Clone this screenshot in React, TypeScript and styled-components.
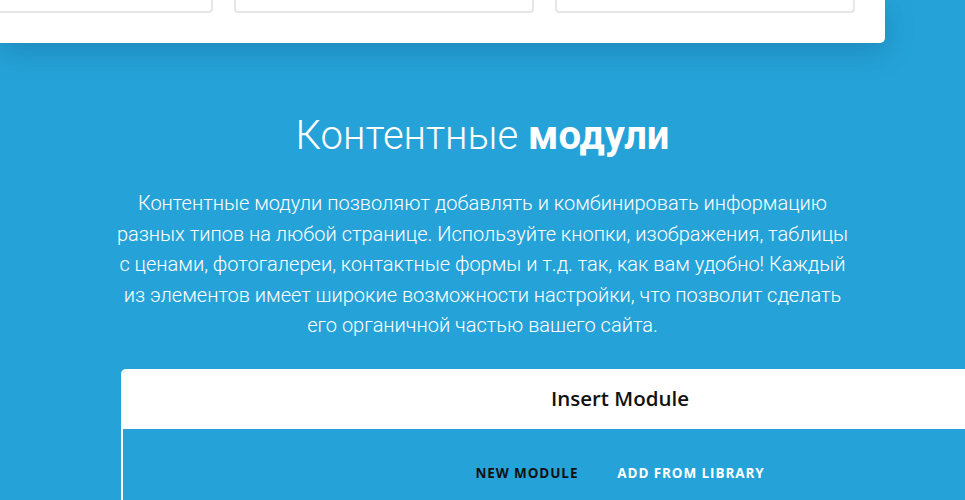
import React from "react";
import styled, { createGlobalStyle } from "styled-components";

const GlobalStyle = createGlobalStyle`
  html, body {
    margin: 0;
    padding: 0;
    background: #25a3d8;
    overflow: hidden;
  }
  * {
    box-sizing: border-box;
  }
`;

const Page = styled.div`
  width: 965px;
  height: 500px;
  overflow: hidden;
  background: #25a3d8;
  font-family: Roboto, "Noto Sans", sans-serif;
`;

const TopCard = styled.div`
  width: 885px;
  height: 43px;
  background: #fff;
  border-radius: 0 0 5px 0;
  box-shadow: 0 8px 30px rgba(0, 40, 80, 0.22);
  padding-right: 32px;
  overflow: hidden;
`;

const BoxRow = styled.div`
  display: flex;
  gap: 21px;
  margin-left: -87px;
`;

const Box = styled.div`
  width: 300px;
  height: 13px;
  border: 2px solid #e6e6e6;
  border-top: none;
  border-radius: 0 0 4px 4px;
  flex-shrink: 0;
`;

const Section = styled.section`
  display: flex;
  flex-direction: column;
  align-items: center;
  padding-top: 66px;
  color: #fff;
`;

const Heading = styled.h2`
  margin: 0;
  font-size: 40px;
  line-height: 53px;
  font-weight: 300;

  strong {
    font-weight: 700;
  }
`;

const Lead = styled.p`
  margin: 26px 0 0;
  font-size: 20px;
  line-height: 30.5px;
  font-weight: 300;
  text-align: center;
`;

const Modal = styled.div`
  margin: 28px 0 0 121px;
  width: 998px;
  border: 2px solid #fff;
  border-bottom: none;
  border-radius: 5px 5px 0 0;
  font-family: "Open Sans", "Noto Sans", sans-serif;
`;

const ModalHeader = styled.div`
  height: 58px;
  padding-bottom: 4px;
  background: #fff;
  display: flex;
  align-items: center;
  justify-content: center;
  border-radius: 3px 3px 0 0;
`;

const ModalTitle = styled.h3`
  margin: 0;
  font-size: 20.5px;
  font-weight: 600;
  color: #111;
`;

const ModalBody = styled.div`
  background: #25a3d8;
  height: 120px;
  padding-top: 34px;
`;

const Tabs = styled.nav`
  display: flex;
  justify-content: center;
  gap: 39px;
`;

const Tab = styled.span<{ $active?: boolean }>`
  font-size: 13.5px;
  font-weight: 700;
  letter-spacing: 0.9px;
  text-transform: uppercase;
  line-height: 20px;
  color: ${(p) => (p.$active ? "#111" : "#fff")};
`;

export default function App() {
  return (
    <Page>
      <GlobalStyle />
      <TopCard>
        <BoxRow>
          <Box />
          <Box />
          <Box />
        </BoxRow>
      </TopCard>
      <Section>
        <Heading>
          Контентные <strong>модули</strong>
        </Heading>
        <Lead>
          Контентные модули позволяют добавлять и комбинировать информацию
          <br />
          разных типов на любой странице. Используйте кнопки, изображения, таблицы
          <br />
          с ценами, фотогалереи, контактные формы и т.д. так, как вам удобно! Каждый
          <br />
          из элементов имеет широкие возможности настройки, что позволит сделать
          <br />
          его органичной частью вашего сайта.
        </Lead>
      </Section>
      <Modal>
        <ModalHeader>
          <ModalTitle>Insert Module</ModalTitle>
        </ModalHeader>
        <ModalBody>
          <Tabs>
            <Tab $active>New Module</Tab>
            <Tab>Add from Library</Tab>
          </Tabs>
        </ModalBody>
      </Modal>
    </Page>
  );
}
